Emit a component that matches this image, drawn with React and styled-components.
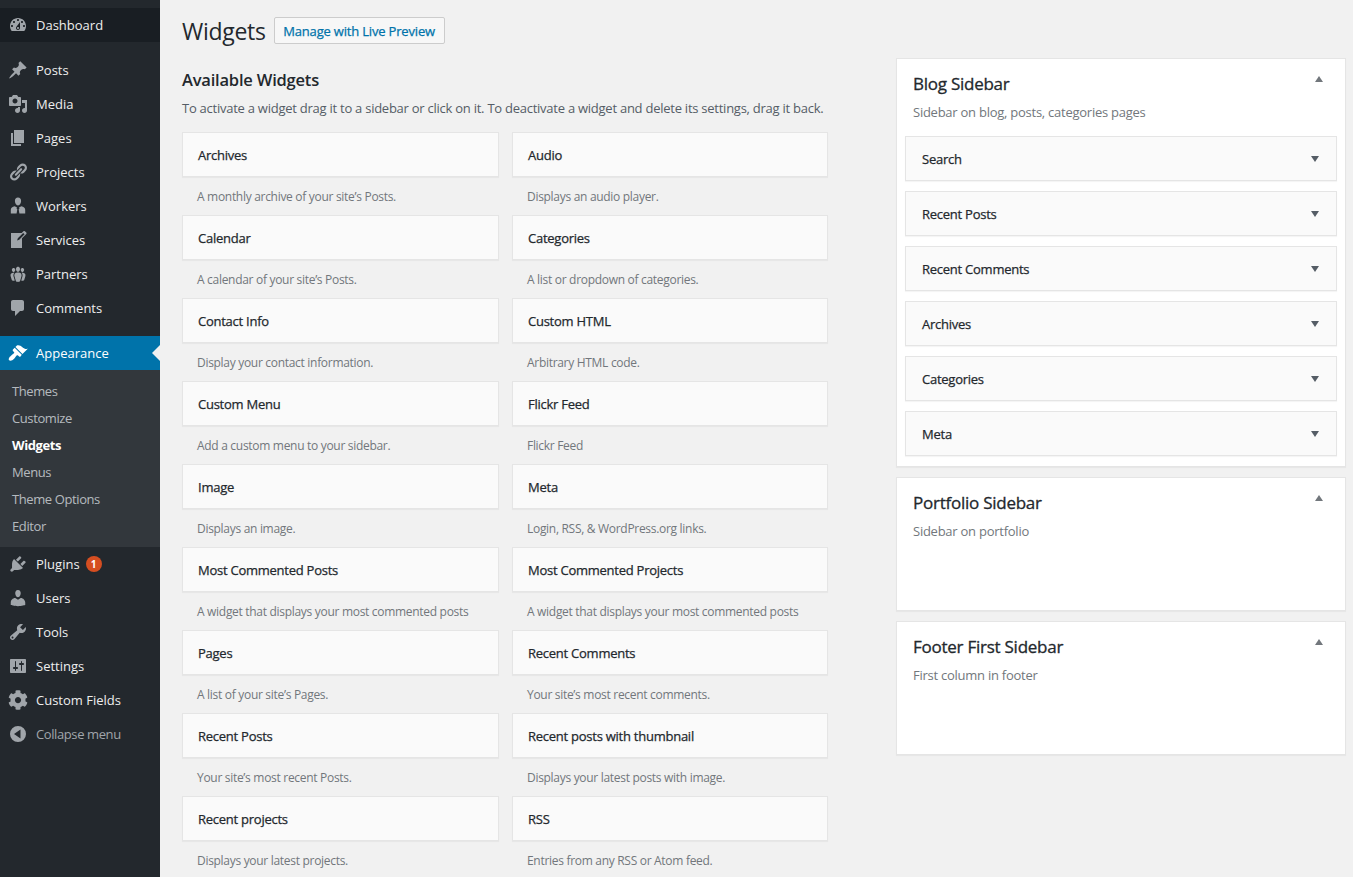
import React from "react";
import styled, { createGlobalStyle } from "styled-components";
import { FaCog } from "react-icons/fa";

const GlobalStyle = createGlobalStyle`
  html, body {
    margin: 0;
    height: 877px;
    overflow: hidden;
    background: #f1f1f1;
  }
  body {
    font-family: "Open Sans", "Noto Sans", sans-serif;
    font-size: 13px;
    letter-spacing: -0.25px;
    color: #23282d;
  }
`;

const Page = styled.div`
  display: flex;
  height: 877px;
`;

const SideMenu = styled.nav`
  width: 160px;
  flex: none;
  background: #23282d;
  padding-top: 8px;
`;

const MenuGroup = styled.div`
  margin-bottom: ${(p) => p.$gap || 0}px;
`;

const MenuItem = styled.div`
  position: relative;
  display: flex;
  align-items: center;
  height: 34px;
  padding-left: 8px;
  letter-spacing: ${(p) => (p.$muted ? "-0.4px" : "0")};
  color: ${(p) => (p.$muted ? "#a0a5aa" : p.$active ? "#fff" : "#eee")};
  background: ${(p) => (p.$active ? "#0073aa" : p.$dark ? "#191e23" : "transparent")};

  svg {
    width: 20px;
    height: 20px;
    margin-right: 8px;
    fill: ${(p) => (p.$active ? "#fff" : "#a0a5aa")};
    flex: none;
  }

  ${(p) =>
    p.$active &&
    `&::after {
      content: "";
      position: absolute;
      right: 0;
      top: 9px;
      border: 8px solid transparent;
      border-right-color: #f1f1f1;
      border-left-width: 0;
    }`}
`;

const SubMenu = styled.div`
  background: #32373c;
  padding: 8px 0 7px;
`;

const SubItem = styled.div`
  height: 27px;
  line-height: 27px;
  padding-left: 12px;
  letter-spacing: -0.4px;
  color: ${(p) => (p.$current ? "#fff" : "rgba(240, 245, 250, 0.7)")};
  font-weight: ${(p) => (p.$current ? 700 : 400)};
`;

const Badge = styled.span`
  display: inline-block;
  width: 16px;
  height: 16px;
  line-height: 16px;
  margin-left: 6px;
  border-radius: 50%;
  background: #d54e21;
  color: #fff;
  font-size: 10px;
  font-weight: 700;
  text-align: center;
`;

const Main = styled.main`
  flex: 1;
  display: flex;
  padding-left: 22px;
`;

const LeftColumn = styled.section`
  width: 646px;
  flex: none;
`;

const TitleRow = styled.div`
  display: flex;
  align-items: center;
  height: 27px;
  margin-top: 17px;
`;

const PageTitle = styled.h1`
  margin: 0 8px 0 0;
  font-size: 23px;
  font-weight: 400;
  letter-spacing: -0.3px;
  color: #23282d;
`;

const LiveButton = styled.a`
  display: block;
  box-sizing: border-box;
  width: 171px;
  height: 27px;
  line-height: 26px;
  text-align: center;
  border: 1px solid #ccc;
  border-radius: 2px;
  background: #f7f7f7;
  color: #0073aa;
  font-weight: 500;
  letter-spacing: -0.18px;
  -webkit-text-stroke: 0.25px #0073aa;
  white-space: nowrap;
`;

const SectionTitle = styled.h2`
  margin: 25px 0 0;
  font-size: 16.5px;
  line-height: 22px;
  font-weight: 600;
  letter-spacing: -0.2px;
`;

const Intro = styled.p`
  margin: 8px 0 0;
  height: 18px;
  line-height: 18px;
  color: #555d66;
  white-space: nowrap;
`;

const WidgetGrid = styled.div`
  display: grid;
  grid-template-columns: 317px 316px;
  column-gap: 13px;
  margin-top: 15px;
`;

const WidgetCell = styled.div`
  height: 83px;
`;

const WidgetCard = styled.div`
  box-sizing: border-box;
  height: 45px;
  line-height: 45px;
  padding-left: 15px;
  background: #fafafa;
  border: 1px solid #e5e5e5;
  box-shadow: 0 1px 1px rgba(0, 0, 0, 0.04);
  font-weight: 500;
  -webkit-text-stroke: 0.25px #23282d;
`;

const WidgetDesc = styled.div`
  height: 38px;
  line-height: 40px;
  padding-left: 15px;
  font-size: 12px;
  letter-spacing: -0.3px;
  color: #72777c;
  white-space: nowrap;
`;

const RightColumn = styled.aside`
  width: 450px;
  flex: none;
  margin-left: 68px;
  padding-top: 58px;
`;

const SidebarPanel = styled.div`
  position: relative;
  box-sizing: border-box;
  min-height: ${(p) => p.$minHeight || 0}px;
  margin-bottom: 10px;
  padding-bottom: 10px;
  background: #fff;
  border: 1px solid #e5e5e5;
  box-shadow: 0 1px 1px rgba(0, 0, 0, 0.04);
`;

const SidebarTitle = styled.h2`
  margin: 0;
  padding: 13px 16px 0;
  font-size: 17px;
  line-height: 24px;
  font-weight: 500;
  letter-spacing: -0.25px;
  -webkit-text-stroke: 0.3px #23282d;
  color: #23282d;
`;

const SidebarDesc = styled.p`
  margin: 7px 0 0;
  padding: 0 16px;
  line-height: 18px;
  color: #72777c;
`;

const SidebarList = styled.div`
  display: flex;
  flex-direction: column;
  gap: 10px;
  margin: 15px 8px 0;
`;

const SidebarWidget = styled.div`
  position: relative;
  box-sizing: border-box;
  height: 45px;
  line-height: 45px;
  padding-left: 16px;
  background: #fafafa;
  border: 1px solid #e5e5e5;
  box-shadow: 0 1px 1px rgba(0, 0, 0, 0.04);
  font-weight: 500;
  -webkit-text-stroke: 0.25px #23282d;

  &::after {
    content: "";
    position: absolute;
    right: 17px;
    top: 19px;
    border: 4px solid transparent;
    border-top: 6px solid #555d66;
    border-bottom-width: 0;
  }
`;

const CollapseToggle = styled.span`
  position: absolute;
  right: 22px;
  top: 17px;
  border: 4px solid transparent;
  border-bottom: 6px solid #72777c;
  border-top-width: 0;
`;

const Icon = ({ d }) => (
  <svg viewBox="0 0 20 20">
    <path d={d} />
  </svg>
);

const icons = {
  dashboard:
    "M3.76 16h12.48c1.1-1.37 1.76-3.11 1.76-5 0-4.42-3.58-8-8-8s-8 3.58-8 8c0 1.89.66 3.63 1.76 5zM10 4c.55 0 1 .45 1 1s-.45 1-1 1-1-.45-1-1 .45-1 1-1zM6 6c.55 0 1 .45 1 1s-.45 1-1 1-1-.45-1-1 .45-1 1-1zm8 0c.55 0 1 .45 1 1s-.45 1-1 1-1-.45-1-1 .45-1 1-1zm-5.37 5.55L12 7v6c0 1.1-.9 2-2 2s-2-.9-2-2c0-.57.24-1.08.63-1.45zM4 10c.55 0 1 .45 1 1s-.45 1-1 1-1-.45-1-1 .45-1 1-1zm12 0c.55 0 1 .45 1 1s-.45 1-1 1-1-.45-1-1 .45-1 1-1zm-5 3c0-.55-.45-1-1-1s-1 .45-1 1 .45 1 1 1 1-.45 1-1z",
  posts:
    "M10.44 3.02l1.82-1.82 6.36 6.35-1.83 1.82c-1.05-.68-2.48-.57-3.41.36l-.75.75c-.92.93-1.04 2.35-.35 3.41l-1.83 1.82-2.41-2.41-2.8 2.79c-.42.42-3.38 2.71-3.8 2.29s1.86-3.39 2.28-3.81l2.79-2.79L4.1 9.36l1.83-1.82c1.05.69 2.48.57 3.4-.36l.75-.75c.93-.92 1.05-2.35.36-3.41z",
  media:
    "M13 11V4c0-.55-.45-1-1-1h-1.67L9 1H5L3.67 3H2c-.55 0-1 .45-1 1v7c0 .55.45 1 1 1h10c.55 0 1-.45 1-1zM7 4.5c1.38 0 2.5 1.12 2.5 2.5S8.38 9.5 7 9.5 4.5 8.38 4.5 7 5.62 4.5 7 4.5zM14 6h5v10.5c0 1.38-1.12 2.5-2.5 2.5S14 17.88 14 16.5s1.12-2.5 2.5-2.5c.17 0 .34.02.5.05V9h-3V6zm-4 8.05V13h2v3.5c0 1.38-1.12 2.5-2.5 2.5S7 17.88 7 16.5 8.12 14 9.5 14c.17 0 .34.02.5.05z",
  pages: "M6 15V2h10v13H6zm-1 1h8v2H3V5h2v11z",
  links:
    "M17.74 2.76c1.68 1.69 1.68 4.41 0 6.1l-1.53 1.52c-1.12 1.12-2.7 1.47-4.14 1.09l2.62-2.61.76-.77.76-.76c.84-.84.84-2.2 0-3.04-.84-.85-2.2-.85-3.04 0l-.77.76-3.38 3.38c-.37-1.44-.02-3.02 1.1-4.14l1.52-1.53c1.69-1.68 4.42-1.68 6.1 0zM8.59 13.43l5.34-5.34c.42-.42.42-1.1 0-1.52-.44-.43-1.13-.39-1.53 0l-5.33 5.34c-.42.42-.42 1.1 0 1.52.44.43 1.13.39 1.52 0zm-.76 2.29l4.14-4.15c.38 1.44.03 3.02-1.09 4.14l-1.52 1.53c-1.69 1.68-4.41 1.68-6.1 0-1.68-1.68-1.68-4.42 0-6.1l1.53-1.52c1.12-1.12 2.7-1.47 4.14-1.1l-4.14 4.15c-.85.84-.85 2.2 0 3.05.84.84 2.2.84 3.04 0z",
  workers:
    "M10 1.5c2 0 3.1 1.5 3.1 3.5 0 2.2-1.3 4.4-3.1 4.4S6.9 7.2 6.9 5c0-2 1.100-3.500 3.100-3.500zM6.700 10.300l2.300 1.200-.5 1 .8.700-.7 4.300H2.800v-3.700c0-1.900 1.600-3.200 3.900-3.500zm6.600 0c2.300.3 3.900 1.600 3.900 3.500v3.700h-5.800l-.7-4.300.8-.7-.5-1z",
  services:
    "M16.89 1.2l1.41 1.41c.39.39.39 1.02 0 1.41L14 8.33V18H3V3h10.67l1.8-1.8c.4-.39 1.03-.4 1.42 0zm-5.66 8.48l5.37-5.36-1.42-1.42-5.36 5.37-.71 2.12z",
  groups:
    "M8.03 4.46c-.29 1.28.55 3.46 1.97 3.46 1.41 0 2.25-2.18 1.96-3.46-.22-.98-1.08-1.63-1.96-1.63-.89 0-1.74.65-1.97 1.63zm-4.13.9c-.25 1.08.47 2.93 1.67 2.93s1.92-1.85 1.67-2.93c-.19-.83-.92-1.39-1.67-1.39s-1.48.56-1.67 1.39zm8.86 0c-.25 1.08.47 2.93 1.66 2.93 1.2 0 1.92-1.85 1.67-2.93-.19-.83-.92-1.39-1.67-1.39-.74 0-1.47.56-1.66 1.39zm-.59 11.43l1.25-4.3C14.2 10 12.71 8.47 10 8.47c-2.72 0-4.21 1.53-3.44 4.02l1.26 4.3C8.05 17.51 9 18 10 18c.98 0 1.94-.49 2.17-1.21zm-6.1-7.63c-.49.67-.96 1.83-.42 3.59l1.12 3.79c-.34.2-.77.31-1.2.31-.85 0-1.65-.41-1.85-1.03l-1.07-3.65c-.65-2.11.61-3.4 2.92-3.4.27 0 .54.02.79.06-.1.1-.2.22-.29.33zm8.35-.39c2.31 0 3.58 1.29 2.92 3.4l-1.07 3.65c-.2.62-1 1.03-1.85 1.03-.43 0-.86-.11-1.2-.31l1.11-3.77c.55-1.78.08-2.94-.42-3.61-.08-.11-.18-.23-.28-.33.25-.04.51-.06.79-.06z",
  comments:
    "M5 2h9c1.1 0 2 .9 2 2v7c0 1.1-.9 2-2 2h-2l-5 5v-5H5c-1.1 0-2-.9-2-2V4c0-1.1.9-2 2-2z",
  appearance:
    "M14.48 11.06L7.41 3.99l1.5-1.5c.5-.56 2.3-.47 3.51.32 1.21.8 1.43 1.28 2.91 2.1 1.18.64 2.45 1.26 4.45.85zm-.71.71L6.7 4.7 4.93 6.47c-.39.39-.39 1.02 0 1.41l1.06 1.06c.39.39.39 1.03 0 1.42-.6.6-1.43 1.11-2.21 1.69-.35.26-.7.53-1.01.84C1.43 13.71.05 16.12 1.2 17.27c1.15 1.15 3.56-.23 4.92-1.58.31-.31.58-.66.84-1.01.58-.78 1.09-1.61 1.69-2.21.39-.39 1.02-.39 1.41 0l1.06 1.06c.39.39 1.02.39 1.41 0z",
  plugins:
    "M13.11 4.36L9.87 7.6 8 5.73l3.24-3.24c.35-.34 1.05-.2 1.56.32.52.51.66 1.21.31 1.55zm-8 1.77l.91-1.12 9.01 9.01-1.19.84c-.71.71-2.63 1.16-3.82 1.16H6.14L4.9 17.26c-.59.59-1.54.59-2.12 0-.59-.58-.59-1.53 0-2.12l1.24-1.24v-3.88c0-1.13.4-3.19 1.09-3.89zm7.26 3.97l3.24-3.24c.34-.35 1.04-.21 1.55.31.52.51.66 1.21.31 1.55l-3.24 3.25z",
  users:
    "M10 9.25c-2.27 0-2.73-3.44-2.73-3.44C7 4.02 7.82 2 9.97 2c2.16 0 2.98 2.02 2.71 3.81 0 0-.41 3.44-2.68 3.44zm0 2.57L12.72 10c2.39 0 4.52 2.33 4.52 4.53v2.49s-3.65 1.13-7.24 1.13c-3.65 0-7.24-1.13-7.24-1.13v-2.49c0-2.25 1.94-4.48 4.47-4.48z",
  tools:
    "M16.68 9.77c-1.34 1.34-3.3 1.67-4.95.99l-5.41 6.52c-.99.99-2.59.99-3.58 0s-.99-2.59 0-3.57l6.52-5.42c-.68-1.65-.35-3.61.99-4.95 1.28-1.28 3.12-1.62 4.72-1.06l-2.89 2.89 2.82 2.82 2.86-2.87c.53 1.58.18 3.39-1.08 4.65zM3.81 16.21c.4.39 1.04.39 1.43 0 .4-.4.4-1.04 0-1.43-.39-.4-1.03-.4-1.43 0-.39.39-.39 1.03 0 1.43z",
  settings:
    "M18 16V4c0-.55-.45-1-1-1H3c-.55 0-1 .45-1 1v12c0 .55.45 1 1 1h14c.55 0 1-.45 1-1zM8 11h1c.55 0 1 .45 1 1s-.45 1-1 1H8v1.5c0 .28-.22.5-.5.5s-.5-.22-.5-.5V13H6c-.55 0-1-.45-1-1s.45-1 1-1h1V5.5c0-.28.22-.5.5-.5s.5.22.5.5V11zm5-2h-1c-.55 0-1-.45-1-1s.45-1 1-1h1V5.5c0-.28.22-.5.5-.5s.5.22.5.5V7h1c.55 0 1 .45 1 1s-.45 1-1 1h-1v5.5c0 .28-.22.5-.5.5s-.5-.22-.5-.5V9z",
  collapse:
    "M10 2a8 8 0 1 1 0 16 8 8 0 0 1 0-16zm2.5 3.5L6 10l6.5 4.5v-9z",
};

const topItems = [
  ["Posts", icons.posts],
  ["Media", icons.media],
  ["Pages", icons.pages],
  ["Projects", icons.links],
  ["Workers", icons.workers],
  ["Services", icons.services],
  ["Partners", icons.groups],
  ["Comments", icons.comments],
];

const subItems = ["Themes", "Customize", "Widgets", "Menus", "Theme Options", "Editor"];

const widgets = [
  ["Archives", "A monthly archive of your site’s Posts."],
  ["Audio", "Displays an audio player."],
  ["Calendar", "A calendar of your site’s Posts."],
  ["Categories", "A list or dropdown of categories."],
  ["Contact Info", "Display your contact information."],
  ["Custom HTML", "Arbitrary HTML code."],
  ["Custom Menu", "Add a custom menu to your sidebar."],
  ["Flickr Feed", "Flickr Feed"],
  ["Image", "Displays an image."],
  ["Meta", "Login, RSS, & WordPress.org links."],
  ["Most Commented Posts", "A widget that displays your most commented posts"],
  ["Most Commented Projects", "A widget that displays your most commented posts"],
  ["Pages", "A list of your site’s Pages."],
  ["Recent Comments", "Your site’s most recent comments."],
  ["Recent Posts", "Your site’s most recent Posts."],
  ["Recent posts with thumbnail", "Displays your latest posts with image."],
  ["Recent projects", "Displays your latest projects."],
  ["RSS", "Entries from any RSS or Atom feed."],
];

const blogWidgets = ["Search", "Recent Posts", "Recent Comments", "Archives", "Categories", "Meta"];

export default function App() {
  return (
    <Page>
      <GlobalStyle />
      <SideMenu>
        <MenuGroup $gap={11}>
          <MenuItem $dark>
            <Icon d={icons.dashboard} />
            Dashboard
          </MenuItem>
        </MenuGroup>
        <MenuGroup $gap={11}>
          {topItems.map(([label, d]) => (
            <MenuItem key={label}>
              <Icon d={d} />
              {label}
            </MenuItem>
          ))}
        </MenuGroup>
        <MenuItem $active>
          <Icon d={icons.appearance} />
          Appearance
        </MenuItem>
        <SubMenu>
          {subItems.map((label) => (
            <SubItem key={label} $current={label === "Widgets"}>
              {label}
            </SubItem>
          ))}
        </SubMenu>
        <MenuItem>
          <Icon d={icons.plugins} />
          Plugins
          <Badge>1</Badge>
        </MenuItem>
        <MenuItem>
          <Icon d={icons.users} />
          Users
        </MenuItem>
        <MenuItem>
          <Icon d={icons.tools} />
          Tools
        </MenuItem>
        <MenuItem>
          <Icon d={icons.settings} />
          Settings
        </MenuItem>
        <MenuItem>
          <FaCog />
          Custom Fields
        </MenuItem>
        <MenuItem $muted>
          <Icon d={icons.collapse} />
          Collapse menu
        </MenuItem>
      </SideMenu>

      <Main>
        <LeftColumn>
          <TitleRow>
            <PageTitle>Widgets</PageTitle>
            <LiveButton>Manage with Live Preview</LiveButton>
          </TitleRow>
          <SectionTitle>Available Widgets</SectionTitle>
          <Intro>
            To activate a widget drag it to a sidebar or click on it. To deactivate a widget and delete its settings, drag it back.
          </Intro>
          <WidgetGrid>
            {widgets.map(([name, desc]) => (
              <WidgetCell key={name}>
                <WidgetCard>{name}</WidgetCard>
                <WidgetDesc>{desc}</WidgetDesc>
              </WidgetCell>
            ))}
          </WidgetGrid>
        </LeftColumn>

        <RightColumn>
          <SidebarPanel>
            <SidebarTitle>Blog Sidebar</SidebarTitle>
            <CollapseToggle />
            <SidebarDesc>Sidebar on blog, posts, categories pages</SidebarDesc>
            <SidebarList>
              {blogWidgets.map((name) => (
                <SidebarWidget key={name}>{name}</SidebarWidget>
              ))}
            </SidebarList>
          </SidebarPanel>
          <SidebarPanel $minHeight={134}>
            <SidebarTitle>Portfolio Sidebar</SidebarTitle>
            <CollapseToggle />
            <SidebarDesc>Sidebar on portfolio</SidebarDesc>
          </SidebarPanel>
          <SidebarPanel $minHeight={134}>
            <SidebarTitle>Footer First Sidebar</SidebarTitle>
            <CollapseToggle />
            <SidebarDesc>First column in footer</SidebarDesc>
          </SidebarPanel>
        </RightColumn>
      </Main>
    </Page>
  );
}
